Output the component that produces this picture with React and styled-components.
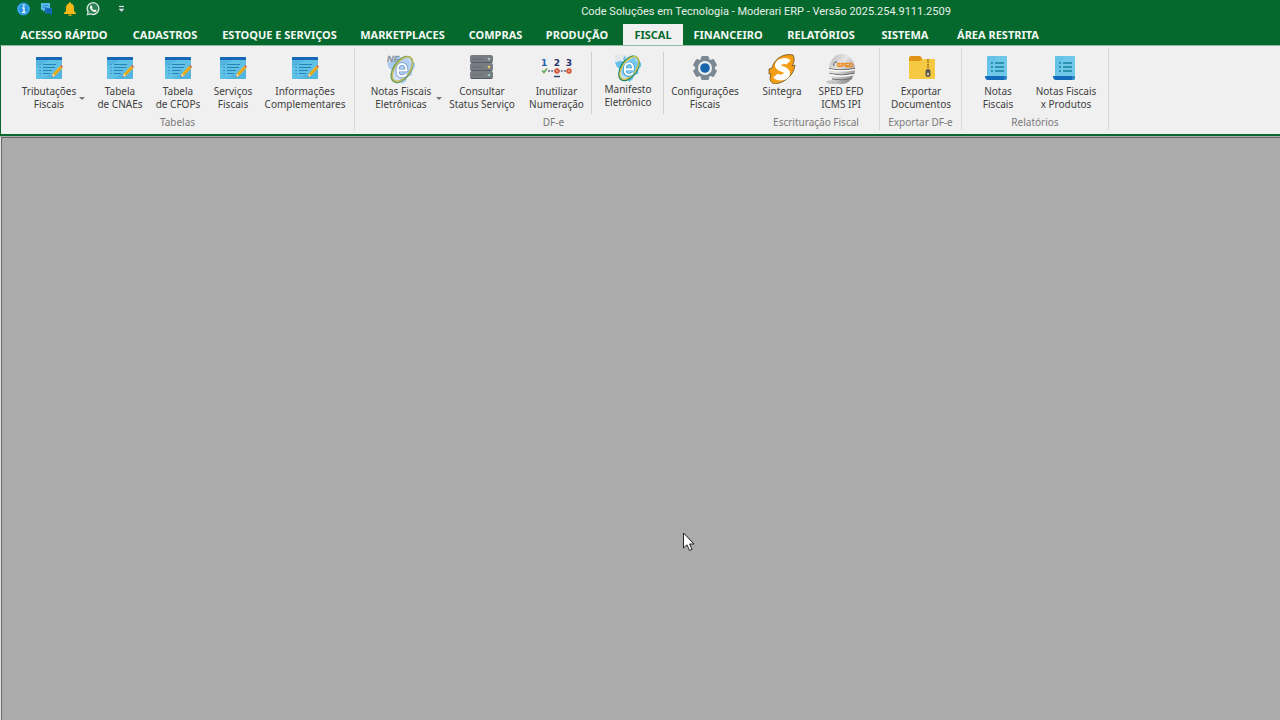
import React, { useState } from "react";
import styled, { createGlobalStyle } from "styled-components";

const GlobalStyle = createGlobalStyle`
    * {
        box-sizing: border-box;
    }
    body {
        margin: 0;
        background: #ababab;
        font-family: "Noto Sans", "Open Sans", sans-serif;
    }
    button {
        font-family: inherit;
        border: none;
        background: none;
        padding: 0;
        margin: 0;
    }
    svg {
        display: block;
    }
`

const Container = styled.div`
    display: flex;
    flex-direction: column;
    min-height: 100vh;
`

const TitleBar = styled.header`
    display: flex;
    align-items: flex-start;
    height: 24px;
    background: #05692d;
`

const QuickAccess = styled.div`
    display: flex;
    gap: 7px;
    width: 252px;
    padding: 1px 0 0 16px;
`

const QuickButton = styled.button`
    display: flex;
    width: 16px;
    height: 16px;
`

const MoreButton = styled(QuickButton)`
    margin-left: 8px;
`

const Title = styled.h1`
    flex: 1;
    margin: 0;
    font-family: Roboto, sans-serif;
    font-size: 11px;
    font-weight: 400;
    line-height: 24px;
    text-align: center;
    white-space: nowrap;
    color: #e6f0e9;
`

const Tabs = styled.nav`
    display: flex;
    height: 21px;
    padding-left: 8px;
    background: #05692d;
`

const Tab = styled.button`
    flex: none;
    width: ${({ $width }) => $width}px;
    margin-left: ${({ $active }) => ($active ? 4 : 0)}px;
    font-size: 11px;
    font-weight: 700;
    line-height: 21px;
    white-space: nowrap;
    color: ${({ $active }) => ($active ? "#05692d" : "#f4f8f5")};
    background: ${({ $active }) => ($active ? "#f0f0f0" : "transparent")};
`

const Ribbon = styled.section`
    display: flex;
    height: 91px;
    padding: 2px 0 4px;
    background: #f0f0f0;
    border-top: 1px solid #8fbca0;
    border-left: 1px solid #05692d;
    border-bottom: 2px solid #05692d;
`

const Group = styled.div`
    display: flex;
    flex-direction: column;
    flex: none;
    width: ${({ $width }) => $width}px;
    padding-left: ${({ $pad }) => $pad || 0}px;
    border-right: 1px solid ${({ $open }) => ($open ? "transparent" : "#d9d9d9")};
`

const Items = styled.div`
    display: flex;
    height: 67px;
    padding-top: 4px;
`

const Caption = styled.div`
    margin-left: -${({ $pad }) => $pad || 0}px;
    font-size: 10px;
    line-height: 14px;
    text-align: center;
    white-space: nowrap;
    color: #7a7a7a;
`

const Item = styled.button`
    position: relative;
    display: flex;
    flex-direction: column;
    align-items: center;
    flex: none;
    gap: ${({ $compact }) => ($compact ? 1 : 3)}px;
    width: ${({ $width }) => $width}px;
    height: 62px;
    padding-top: 2px;
`

const Label = styled.span`
    font-size: 10px;
    line-height: 13px;
    text-align: center;
    white-space: pre;
    color: #404040;
`

const Arrow = styled.span`
    position: absolute;
    top: 45px;
    right: ${({ $right }) => $right}px;
    border: 3px solid transparent;
    border-top-color: #777;
    border-bottom: none;
`

const Divider = styled.div`
    width: 1px;
    height: 62px;
    margin-right: 1px;
    background: #cfcfcf;
`

const Workspace = styled.main`
    flex: 1;
    margin-top: 1px;
    border-top: 1px solid #696969;
    border-left: 1px solid #696969;
    box-shadow: -1px 0 0 #e3e3e3;
    margin-left: 1px;
    background: #ababab;
`

const Pointer = styled.div`
    position: absolute;
    left: 683px;
    top: 532px;
`

const TableIcon = () => (
    <svg width="28" height="28" viewBox="0 0 28 28">
        <rect x="1" y="3" width="26" height="22" rx="1" fill="#52b4e0" />
        <path d="M1 13L14 6H27V12L8 25H1Z" fill="#6cc8ea" opacity=".6" />
        <path d="M1 4a1 1 0 0 1 1-1H26a1 1 0 0 1 1 1V6H1Z" fill="#1667b7" />
        <path d="M8 10.5H21M8 13.5H20M8 16.5H17M8 19.5H15" stroke="#2585b8" strokeWidth="1.1" />
        <path d="M4 10.5H6M4 13.5H6M4 16.5H6M4 19.5H6" stroke="#3b9bc9" strokeWidth="1" />
        <path d="M17 23L18 19.5L25 12L27.5 14L20 21.7Z" fill="#f4b51c" />
        <path d="M19 21L26 13.6" stroke="#d58d10" strokeWidth=".9" />
        <path d="M25 12L26.2 10.7L28 12.7L27.3 14Z" fill="#be6c66" />
        <path d="M16.5 23.5L18 19.5L20 21.7Z" fill="#f7dfad" />
        <path d="M16.5 23.5L17 22L18 23Z" fill="#444" />
    </svg>
)

const NfeIcon = ({ mdf }) => (
    <svg width={mdf ? 28 : 30} height={mdf ? 28 : 30} viewBox="0 0 30 30">
        <path
            d="M1 9L8 7L11 2L17 4L22 4L24 8L29 9L29 13L26 17L26 21L21 23L20 27L16 30L14 25L9 22L8 17L3 14Z"
            fill={mdf ? "#63bfec" : "#a9cbf2"}
        />
        <text x={mdf ? 0 : 1} y="8" fontFamily="Liberation Sans" fontSize="9" fontWeight="700" fontStyle="italic" fill={mdf ? "#fbfcfc" : "#8795a5"} stroke={mdf ? "#c3ced3" : "#8795a5"} strokeWidth=".3">
            {mdf ? "MDF" : "NF"}
        </text>
        <ellipse cx="16" cy="15.5" rx="8.5" ry="14.5" transform="rotate(34 16 15.5)" fill={mdf ? "#8bd0f2" : "#bdd6f5"} fillOpacity=".5" stroke={mdf ? "#178665" : "#6f9f5e"} strokeWidth="1.6" />
        <ellipse cx="16.5" cy="15" rx="7.4" ry="14" transform="rotate(36 16.5 15)" fill="none" stroke={mdf ? "#dfc443" : "#c3bb55"} strokeWidth="1.3" />
        <path d="M12 16.5H20.5C20.5 12 18.5 10 16.2 10C13 10 11.5 13 11.5 16.5C11.5 20 13.2 22.3 16 22.3C18 22.3 19.5 21.4 20.3 20" fill="none" stroke={mdf ? "#3b9acb" : "#6f95c8"} strokeWidth="3.6" />
        <path d="M12 16.5H20.5C20.5 12 18.5 10 16.2 10C13 10 11.5 13 11.5 16.5C11.5 20 13.2 22.3 16 22.3C18 22.3 19.5 21.4 20.3 20" fill="none" stroke="#fff" strokeWidth="2.2" />
    </svg>
)

const ServerIcon = () => (
    <svg width="28" height="28" viewBox="0 0 28 28">
        {[1, 9, 17].map((y, i) => (
            <g key={y}>
                <rect x="2" y={y} width="23" height="8" rx="2" fill="#777d83" />
                <path d={`M3 ${y + 7.5}H24`} stroke="#555c63" />
                <path d={`M5 ${y + 4}H14`} stroke="#5f666d" strokeWidth="1.2" strokeDasharray="1.5 1" />
                <circle cx="21" cy={y + 4} r="1.3" fill={["#a8c3bd", "#edc45c", "#97c9ba"][i]} />
            </g>
        ))}
    </svg>
)

const NumbersIcon = () => (
    <svg width="32" height="28" viewBox="0 0 32 28">
        <g fontFamily="DejaVu Sans" fontSize="9" fontWeight="700" textAnchor="middle">
            <text x="3" y="12" fill="#2762a8">1</text>
            <text x="16" y="12" fill="#26356b">2</text>
            <text x="28" y="12" fill="#26356b">3</text>
        </g>
        <path d="M7 17H26" stroke="#5b6687" strokeWidth="1.5" strokeDasharray="2 1.2" />
        <path d="M1 16.5L3 18.5L6 14.5" fill="none" stroke="#63a84c" strokeWidth="1.5" />
        <circle cx="16" cy="17" r="2.7" fill="#d45434" />
        <circle cx="28" cy="17" r="2.7" fill="#d45434" />
        <path d="M14.8 15.8L17.2 18.2M17.2 15.8L14.8 18.2M26.8 15.8L29.2 18.2M29.2 15.8L26.8 18.2" stroke="#f3b39c" strokeWidth=".7" />
        <path d="M13 22.5H19" stroke="#34446f" strokeWidth="1.5" />
    </svg>
)

const GearIcon = () => (
    <svg width="28" height="28" viewBox="0 0 28 28">
        {[0, 60, 120].map((a) => (
            <rect key={a} x="10" y="2" width="8" height="24" rx="1.5" fill="#7c8894" transform={`rotate(${a} 14 14)`} />
        ))}
        <circle cx="14" cy="14" r="10" fill="#7c8894" />
        <circle cx="14" cy="14" r="7" fill="#edf0f2" />
        <circle cx="14" cy="14" r="4.8" fill="#1765ad" />
    </svg>
)

const SintegraIcon = () => (
    <svg width="30" height="30" viewBox="0 0 30 30">
        <path d="M6 11C9 4 17 -1 26 1C28 5 27 9 25 12L28 11C27 20 20 28 8 30C3 29 2 25 4 20L2 20V15L5 14Z" fill="#f29d13" stroke="#5c441d" strokeWidth=".7" />
        <path d="M21.5 8.5C18.5 5.5 11 7.5 11 11.5C11 15.5 20 14.5 20 19C20 23.5 11.5 25 8.5 21.5" fill="none" stroke="#fff" strokeWidth="6" strokeLinejoin="round" />
    </svg>
)

const SpedIcon = () => (
    <svg width="32" height="30" viewBox="0 0 32 30">
        <defs>
            <linearGradient id="sped" x1="0" y1="0" x2="1" y2="1">
                <stop offset="0" stopColor="#b5b5b5" />
                <stop offset=".4" stopColor="#e6e6e6" />
                <stop offset="1" stopColor="#707070" />
            </linearGradient>
        </defs>
        <ellipse cx="11" cy="28" rx="10" ry="2" fill="#c4c4c4" />
        <path d="M17 0C25 0 30 8 30 15C30 23 24 30 17 30C9 30 4 23 4 15C4 8 9 0 17 0Z" fill="url(#sped)" />
        <path d="M4 14.5Q15 17 30 14.5M4.5 19.5Q16 22.5 29.5 19.5M7 25Q17 27 27 24.5" fill="none" stroke="#6e6e6e" strokeWidth="1" />
        <path d="M4 15.7Q15 18.2 30 15.7M5 20.7Q16 23.7 29 20.7" fill="none" stroke="#fff" strokeWidth="1.3" />
        <path d="M9 12C8 9 9 8 12 8" fill="none" stroke="#555" />
        <text x="12" y="12.5" fontFamily="Liberation Sans" fontSize="6" fontWeight="700" fill="#ed8b13" stroke="#ed8b13" strokeWidth=".4">SPED</text>
    </svg>
)

const FolderIcon = () => (
    <svg width="28" height="28" viewBox="0 0 28 28">
        <path d="M2 4Q2 2 4 2H13L15 4V8H2Z" fill="#df9417" />
        <path d="M2 7H13L16 5H27Q28 5 28 6V24Q28 25 27 25H3Q2 25 2 24Z" fill="#f5c941" />
        <path d="M21 5V16" stroke="#a77919" strokeWidth="2" strokeDasharray="1.5 1" />
        <rect x="18.5" y="15" width="5" height="8" rx="2.5" fill="#555" />
        <rect x="20" y="18.5" width="2" height="3" rx="1" fill="#d8c898" />
    </svg>
)

const ReportIcon = () => (
    <svg width="28" height="28" viewBox="0 0 28 28">
        <path d="M3 3Q3 2 4 2H22Q23 2 23 3V25H3Z" fill="#65c2e8" />
        <path d="M13 2H22Q23 2 23 3V23H3Z" fill="#79cdec" opacity=".5" />
        <path d="M11 9H20M11 13H20M11 17H20" stroke="#168199" strokeWidth="1.6" />
        <path d="M7 9H9M7 13H9M7 17H9" stroke="#168199" strokeWidth="1.6" />
        <path d="M1 22H20V24Q20 26 22 26H4Q1 26 1 22Z" fill="#126bb9" />
        <path d="M20 22H23V24Q23 26 21.5 26Q20 26 20 24Z" fill="#3086c7" />
    </svg>
)

const InfoIcon = () => (
    <svg width="16" height="16" viewBox="0 0 16 16">
        <circle cx="7.5" cy="8" r="6.5" fill="#2494df" />
        <circle cx="7.5" cy="8" r="5.2" fill="none" stroke="#59b4ec" strokeWidth=".8" />
        <path d="M6.3 7H8V11.3M6 11.3H9.5" fill="none" stroke="#fff" strokeWidth="1.3" />
        <circle cx="7.8" cy="4.4" r="1" fill="#fff" />
    </svg>
)

const ChatIcon = () => (
    <svg width="16" height="16" viewBox="0 0 16 16">
        <path d="M2 2H11V9H6L4 11V9H2Z" fill="#56b8e9" />
        <path d="M4 4.5H9M4 6.5H8" stroke="#2f8cc6" strokeWidth=".8" />
        <path d="M6 7H13V14L11 12.5H6Z" fill="#166eb9" />
        <path d="M8 9.5H12" stroke="#0b5ba0" />
    </svg>
)

const BellIcon = () => (
    <svg width="16" height="16" viewBox="0 0 16 16">
        <path d="M7 2.5Q7 1 8 1T9 2.5Q12 3 12 7V10L14 12V13H2V12L4 10V7Q4 3 7 2.5Z" fill="#f6b818" />
        <path d="M6 13.5H10Q9.5 15 8 15T6 13.5Z" fill="#e7a610" />
    </svg>
)

const WhatsIcon = () => (
    <svg width="16" height="16" viewBox="0 0 16 16">
        <path d="M1.5 14.5L2.5 11A6.5 6.5 0 1 1 5.3 13.5Z" fill="#d8e9df" />
        <path d="M3.2 12.8L3.8 10.6A5.2 5.2 0 1 1 5.7 12.2Z" fill="#2d8352" />
        <path d="M5.7 4.5L6.8 4.4L7.5 6.2L6.9 7Q7.8 8.7 9.2 9.2L9.9 8.5L11.5 9.3Q11.5 11 9.7 11Q6.5 10.6 5 7Q4.8 5.4 5.7 4.5Z" fill="#fff" />
    </svg>
)

const MoreIcon = () => (
    <svg width="16" height="16" viewBox="0 0 16 16">
        <path d="M3 5.5H8" stroke="#e1e4ee" strokeWidth="1.2" />
        <path d="M3 8H8L5.5 10.5Z" fill="#e1e4ee" stroke="#c9cfe0" strokeWidth=".6" />
    </svg>
)

const ManifestoIcon = () => <NfeIcon mdf />

const quick = [
    { name: "Informações", Icon: InfoIcon },
    { name: "Mensagens", Icon: ChatIcon },
    { name: "Notificações", Icon: BellIcon },
    { name: "WhatsApp", Icon: WhatsIcon },
]

const tabs = [
    { name: "ACESSO RÁPIDO", width: 112 },
    { name: "CADASTROS", width: 90 },
    { name: "ESTOQUE E SERVIÇOS", width: 139 },
    { name: "MARKETPLACES", width: 107 },
    { name: "COMPRAS", width: 79 },
    { name: "PRODUÇÃO", width: 84 },
    { name: "FISCAL", width: 60 },
    { name: "FINANCEIRO", width: 90 },
    { name: "RELATÓRIOS", width: 96 },
    { name: "SISTEMA", width: 72 },
    { name: "ÁREA RESTRITA", width: 114 },
]

const groups = [
    {
        caption: "Tabelas",
        width: 354,
        pad: 6,
        items: [
            { label: "Tributações\nFiscais", width: 84, Icon: TableIcon, arrow: 6 },
            { label: "Tabela\nde CNAEs", width: 58, Icon: TableIcon },
            { label: "Tabela\nde CFOPs", width: 58, Icon: TableIcon },
            { label: "Serviços\nFiscais", width: 52, Icon: TableIcon },
            { label: "Informações\nComplementares", width: 92, Icon: TableIcon },
        ],
    },
    {
        caption: "DF-e",
        width: 398,
        pad: 5,
        open: true,
        items: [
            { label: "Notas Fiscais\nEletrônicas", width: 82, Icon: NfeIcon, arrow: 0, compact: true },
            { label: "Consultar\nStatus Serviço", width: 80, Icon: ServerIcon },
            { label: "Inutilizar\nNumeração", width: 69, Icon: NumbersIcon },
            { divider: true },
            { label: "Manifesto\nEletrônico", width: 70, Icon: ManifestoIcon, compact: true },
            { divider: true },
            { label: "Configurações\nFiscais", width: 80, Icon: GearIcon },
        ],
    },
    {
        caption: "Escrituração Fiscal",
        width: 127,
        items: [
            { label: "Sintegra", width: 58, Icon: SintegraIcon, compact: true },
            { label: "SPED EFD\nICMS IPI", width: 60, Icon: SpedIcon, compact: true },
        ],
    },
    {
        caption: "Exportar DF-e",
        width: 82,
        items: [{ label: "Exportar\nDocumentos", width: 82, Icon: FolderIcon }],
    },
    {
        caption: "Relatórios",
        width: 147,
        items: [
            { label: "Notas\nFiscais", width: 72, Icon: ReportIcon },
            { label: "Notas Fiscais\nx Produtos", width: 64, Icon: ReportIcon },
        ],
    },
]

const App = () => {

    const [active, setActive] = useState("FISCAL");

    return (
        <>
            <GlobalStyle />
            <Container>
                <TitleBar>
                    <QuickAccess>
                        {quick.map(({ name, Icon }) => (
                            <QuickButton key={name} aria-label={name}>
                                <Icon />
                            </QuickButton>
                        ))}
                        <MoreButton aria-label="Personalizar">
                            <MoreIcon />
                        </MoreButton>
                    </QuickAccess>
                    <Title>Code Soluções em Tecnologia - Moderari ERP - Versão 2025.254.9111.2509</Title>
                </TitleBar>
                <Tabs>
                    {tabs.map((tab) => (
                        <Tab key={tab.name} $width={tab.width} $active={tab.name === active} onClick={() => setActive(tab.name)}>
                            {tab.name}
                        </Tab>
                    ))}
                </Tabs>
                <Ribbon>
                    {groups.map((group) => (
                        <Group key={group.caption} $width={group.width} $pad={group.pad} $open={group.open}>
                            <Items>
                                {group.items.map((item, i) =>
                                    item.divider ? (
                                        <Divider key={i} />
                                    ) : (
                                        <Item key={i} $width={item.width} $compact={item.compact}>
                                            <item.Icon />
                                            <Label>{item.label}</Label>
                                            {item.arrow !== undefined && <Arrow $right={item.arrow} />}
                                        </Item>
                                    )
                                )}
                            </Items>
                            <Caption $pad={group.pad}>{group.caption}</Caption>
                        </Group>
                    ))}
                </Ribbon>
                <Workspace />
                <Pointer>
                    <svg width="12" height="20" viewBox="0 0 12 20">
                        <path d="M.5 1V16L4 12.8L6.5 18.5L9 17.3L6.6 12H11Z" fill="#fff" stroke="#222" />
                    </svg>
                </Pointer>
            </Container>
        </>
    )

}

export default App
